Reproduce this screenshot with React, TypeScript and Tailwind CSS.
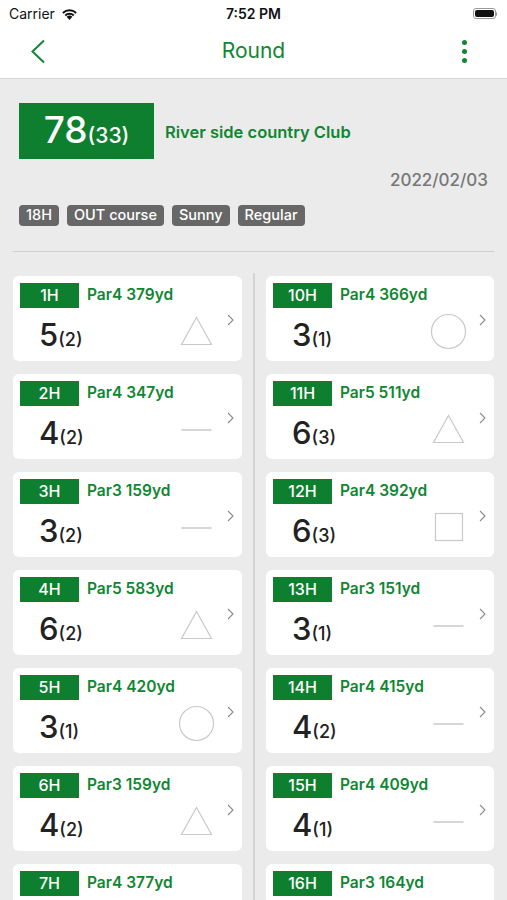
import React from "react";

type Mark = "triangle" | "dash" | "circle" | "square";

type Hole = {
  no: number;
  par: number;
  yd: number;
  score: number;
  putt: number;
  mark: Mark;
};

const front: Hole[] = [
  { no: 1, par: 4, yd: 379, score: 5, putt: 2, mark: "triangle" },
  { no: 2, par: 4, yd: 347, score: 4, putt: 2, mark: "dash" },
  { no: 3, par: 3, yd: 159, score: 3, putt: 2, mark: "dash" },
  { no: 4, par: 5, yd: 583, score: 6, putt: 2, mark: "triangle" },
  { no: 5, par: 4, yd: 420, score: 3, putt: 1, mark: "circle" },
  { no: 6, par: 3, yd: 159, score: 4, putt: 2, mark: "triangle" },
  { no: 7, par: 4, yd: 377, score: 5, putt: 2, mark: "triangle" },
  { no: 8, par: 5, yd: 502, score: 5, putt: 2, mark: "dash" },
  { no: 9, par: 4, yd: 388, score: 4, putt: 2, mark: "dash" },
];

const back: Hole[] = [
  { no: 10, par: 4, yd: 366, score: 3, putt: 1, mark: "circle" },
  { no: 11, par: 5, yd: 511, score: 6, putt: 3, mark: "triangle" },
  { no: 12, par: 4, yd: 392, score: 6, putt: 3, mark: "square" },
  { no: 13, par: 3, yd: 151, score: 3, putt: 1, mark: "dash" },
  { no: 14, par: 4, yd: 415, score: 4, putt: 2, mark: "dash" },
  { no: 15, par: 4, yd: 409, score: 4, putt: 1, mark: "dash" },
  { no: 16, par: 3, yd: 164, score: 4, putt: 2, mark: "triangle" },
  { no: 17, par: 4, yd: 372, score: 4, putt: 2, mark: "dash" },
  { no: 18, par: 5, yd: 521, score: 5, putt: 2, mark: "dash" },
];

const MarkIcon = ({ mark }: { mark: Mark }) => {
  if (mark === "triangle") {
    return (
      <svg width="33" height="30" viewBox="0 0 33 30" fill="none">
        <path d="M16.5 1.5 L31.5 28.5 L1.5 28.5 Z" stroke="#c9c9c9" strokeWidth="1.2" />
      </svg>
    );
  }
  if (mark === "circle") {
    return (
      <svg width="37" height="37" viewBox="0 0 37 37" fill="none">
        <circle cx="18.5" cy="18.5" r="17" stroke="#c9c9c9" strokeWidth="1.2" />
      </svg>
    );
  }
  if (mark === "square") {
    return (
      <svg width="30" height="30" viewBox="0 0 30 30" fill="none">
        <rect x="1.5" y="1.5" width="27" height="27" stroke="#c9c9c9" strokeWidth="1.2" />
      </svg>
    );
  }
  return (
    <svg width="33" height="30" viewBox="0 0 33 30" fill="none">
      <line x1="1.5" y1="16" x2="31.5" y2="16" stroke="#c9c9c9" strokeWidth="1.5" />
    </svg>
  );
};

const HoleCard = ({ hole }: { hole: Hole }) => {
  return (
    <div className="flex h-[85px] rounded-md bg-white pl-[7px] pr-[8px] pt-[7px]">
      <div className="flex flex-1 flex-col">
        <div className="flex items-center">
          <div className="flex h-[25px] w-[59px] items-center justify-center bg-[#0d7f2e] text-[16px] font-medium text-white">
            {hole.no}H
          </div>
          <span className="ml-[8px] text-[15.5px] font-semibold text-[#118632]">
            Par{hole.par} {hole.yd}yd
          </span>
        </div>
        <div className="mt-[9px] flex items-baseline pl-[19px] text-[#222]">
          <span className="text-[31px] font-medium leading-[36px]">{hole.score}</span>
          <span className="text-[18px] font-medium">({hole.putt})</span>
        </div>
      </div>
      <div className="mb-[11px] mr-[12px] flex h-[37px] w-[37px] items-center justify-center self-end">
        <MarkIcon mark={hole.mark} />
      </div>
      <div className="mt-[31px] self-start">
        <svg width="7" height="12" viewBox="0 0 7 12" fill="none">
          <path d="M1 1 L6 6 L1 11" stroke="#8a8a8a" strokeWidth="1.1" />
        </svg>
      </div>
    </div>
  );
};

const App = () => {
  return (
    <div
      className="min-h-screen w-full bg-[#ebebeb]"
      style={{ fontFamily: 'Inter, "Liberation Sans", Arial, sans-serif' }}
    >
      <div className="bg-white">
        <div className="relative flex h-[27px] items-center px-[9px]">
          <span className="text-[14px] text-[#111]">Carrier</span>
          <svg className="ml-[6px]" width="17" height="12" viewBox="0 0 17 12">
            <path d="M8.5 12 L5.6 8.8 A4.2 4.2 0 0 1 11.4 8.8 Z" fill="#111" />
            <path d="M3.6 6.8 A7 7 0 0 1 13.4 6.8 L12.1 8.2 A5.2 5.2 0 0 0 4.9 8.2 Z" fill="#111" />
            <path d="M1.2 4.3 A10.5 10.5 0 0 1 15.8 4.3 L14.5 5.7 A8.6 8.6 0 0 0 2.5 5.7 Z" fill="#111" />
          </svg>
          <span className="absolute left-1/2 -translate-x-1/2 text-[14px] font-semibold text-[#111]">
            7:52 PM
          </span>
          <div className="ml-auto mr-[1px] flex items-center">
            <div className="h-[11px] w-[23px] rounded-[3px] border border-[#999] p-[1px]">
              <div className="h-full w-full rounded-[2px] bg-[#111]" />
            </div>
            <div className="h-[4px] w-[1.5px] rounded-r bg-[#999]" />
          </div>
        </div>
        <div className="relative flex h-[52px] items-center justify-center border-b border-[#d6d6d6] pb-[3px]">
          <svg className="absolute left-[29px] top-[12px]" width="18" height="25" viewBox="0 0 18 25" fill="none">
            <path d="M15 1.5 L3.5 12.5 L15 23.5" stroke="#118632" strokeWidth="2" />
          </svg>
          <span className="text-[21px] text-[#118632]">Round</span>
          <div className="absolute right-[40px] top-[13px] flex flex-col gap-[4px]">
            <div className="h-[5px] w-[5px] rounded-full bg-[#118632]" />
            <div className="h-[5px] w-[5px] rounded-full bg-[#118632]" />
            <div className="h-[5px] w-[5px] rounded-full bg-[#118632]" />
          </div>
        </div>
      </div>

      <div className="px-[13px]">
        <div className="px-[6px] pt-[24px]">
          <div className="flex items-center">
            <div className="flex h-[56px] w-[135px] items-baseline justify-center bg-[#0d7f2e] pt-[5px] text-white">
              <span className="text-[37px] font-medium leading-[44px]">78</span>
              <span className="text-[21px] font-medium">(33)</span>
            </div>
            <span className="ml-[11px] mt-[2px] text-[16.5px] font-semibold text-[#118632]">
              River side country Club
            </span>
          </div>
          <div className="mt-[9px] text-right text-[17px] font-medium text-[#777]">2022/02/03</div>
          <div className="mt-[11px] flex gap-[8px]">
            {["18H", "OUT course", "Sunny", "Regular"].map((t) => (
              <span
                key={t}
                className="flex h-[21px] items-center rounded-[4px] bg-[#676767] px-[7px] text-[14.5px] font-medium text-white"
              >
                {t}
              </span>
            ))}
          </div>
        </div>
        <div className="mt-[25px] h-[1px] bg-[#cfcfcf]" />
        <div className="mt-[21px] flex">
          <div className="flex w-[229px] flex-col gap-[13px] pt-[3px]">
            {front.map((h) => (
              <HoleCard key={h.no} hole={h} />
            ))}
          </div>
          <div className="mx-[11px] w-[2px] bg-[#d3d3d3]" />
          <div className="flex w-[228px] flex-col gap-[13px] pt-[3px]">
            {back.map((h) => (
              <HoleCard key={h.no} hole={h} />
            ))}
          </div>
        </div>
      </div>
    </div>
  );
};

export default App;
